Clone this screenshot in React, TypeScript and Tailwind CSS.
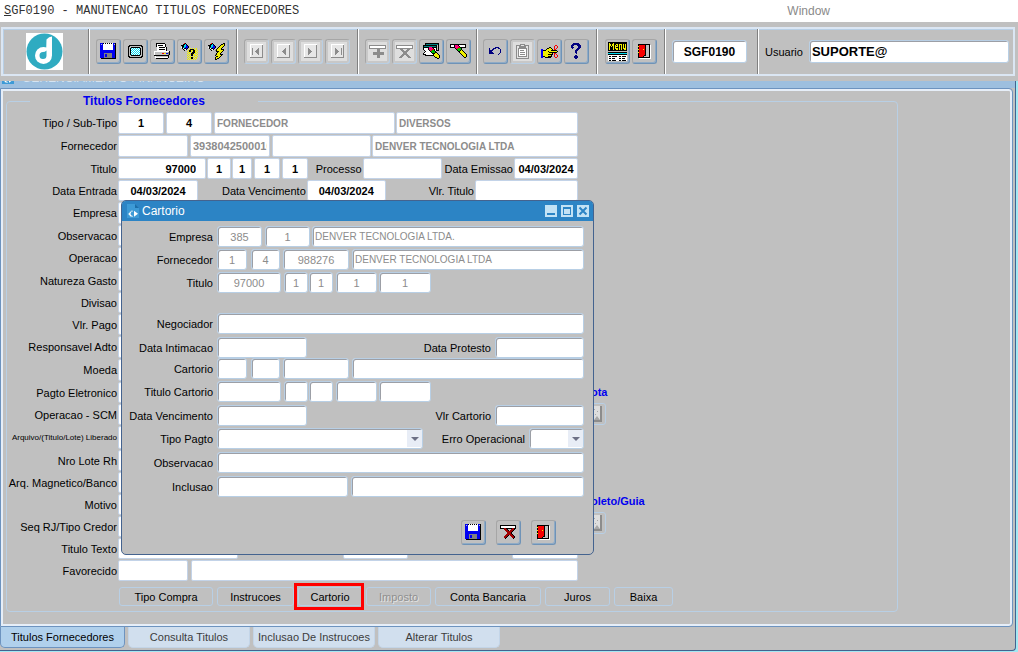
import { useState } from "react";
import type { ReactNode } from "react";
import clsx from "clsx";

// One character per pixel, "." is transparent.
const PALETTE: Record<string, string> = {
  K: "#000000",
  W: "#ffffff",
  B: "#0000f0",
  N: "#000080",
  G: "#808080",
  L: "#c0c0c0",
  S: "#8c8c8c",
  D: "#e6e6e6",
  R: "#f80000",
  M: "#a00000",
  Y: "#f0f000",
  C: "#00d8f0",
  T: "#008080",
  E: "#00c000",
  P: "#ff0080",
};

const FLOPPY = [
  "BBBKWKWKWKWKWBBK",
  "BLBWWWWWWWWWWBLK",
  "BBBWWWWWWWWWWBBK",
  "BBBWWWWWWWWWWBBK",
  "BBBWWWWWWWWWWBBK",
  "BBBWWWWWWWWWWBBK",
  "BBBWWWWWWWWWWBBK",
  "BBBBBBBBBBBBBBBK",
  "BBBBBBBBBBBBBBBK",
  "BBBBBBBBBBBBBBBK",
  "BBBBGGGGGGGGBBBK",
  "BBBBGBBGGGGGBBBK",
  "BBBBGBBGGGGGBBBK",
  "BBBBGBBGGGGGBBBK",
  "BBBBGGGGGGGGBBBK",
  ".KKKKKKKKKKKKKKK",
];

const SCREEN = [
  ".KKKKKKKKKKKKK.",
  "KKLLLLLLLLLLLKK",
  "KLLKKKKKKKKKLLK",
  "KLKCWCWCWCWCKLK",
  "KLKWCWCWCWCWKLK",
  "KLKCWCWCWCWCKLK",
  "KLKWCWCWCWCWKLK",
  "KLKCWCWCWCWCKLK",
  "KLKWCWCWCWCWKLK",
  "KLKCWCWCWCWCKLK",
  "KLLKKKKKKKKKLLK",
  "KKLLLLLLLLLLLKK",
  ".KKKKKKKKKKKKK.",
];

const PRINTER = [
  "..KKKKKKKKK.....",
  "..KWWWWWWWWK....",
  "..KWKKKKKWWK....",
  "..KWWWWWWWWK....",
  "...WWKKKKKKWK...",
  "...WWWWWWWWWK...",
  "...WWKKKKKKWK...",
  "...WWWWWWWWWK...",
  "WWWWWWWWWWWWWWWK",
  "WLLLLLLLLLLLLLGK",
  "WLLLLLLLRRYYBBGK",
  "WLLLLLLLLLLLLLGK",
  "KKKKKKKKKKKKKKK.",
  ".WLLLLLLLLLLLLK.",
  ".WWWWWWWWWWWWWK.",
  "..KKKKKKKKKKKK..",
];

const TORCH_HELP = [
  "...RK............",
  "..KKCK...........",
  "KKKCCBK..........",
  ".KKCCBBK.........",
  "WKTCBBBK.........",
  ".KWKKBK..Y.Y.Y.Y.",
  "..K.WK..YKKKKY.Y.",
  "...K...YKKYYKKY.Y",
  "......Y.KKY.KKYY.",
  ".......YY.YKKKY.Y",
  "......Y.Y.KKK.YY.",
  ".......Y.YKKYY..Y",
  "......Y.Y.KK.YYY.",
  ".......Y.Y.Y.Y..Y",
  "......Y.YYKKY.YY.",
  ".......Y.YKK.Y.Y.",
  "......Y.Y.Y.Y.Y..",
];

const TORCH_BOLT = [
  "...RK..........KK",
  "..KKCK.......KKYK",
  "KKKCCBK.....KYYYK",
  ".KKCCBBK...KYYYK.",
  "WKTCBBBK..KYYYK..",
  ".KWKKBK..KYYYK...",
  "..K.WK..KYYYYKKK.",
  "...K...GKYYYYYYK.",
  "........KKKYYYK..",
  ".........KYYYK...",
  "........KYYYK....",
  ".......GKYYYKKK..",
  ".......KYYYYYK...",
  "........KKYYK....",
  ".......KYYYK.....",
  ".......KYKK......",
  ".......KK........",
];

const ADD_RECORD = [
  "SSSSSSSSSSSSSSSSS",
  "SWWWWWWWWWWWWWWWS",
  "SWWWWWWWWWWWWWWWS",
  "SSSSSSSSSSSSSSSSS",
  "........SSS......",
  "........SSS......",
  "........SSS......",
  "....SSSSSSSSSSS..",
  "....SSSSSSSSSSS..",
  "....SSSSSSSSSSS..",
  "........SSS......",
  "........SSS......",
  "........SSS......",
];

const DROP_RECORD = [
  "SSSSSSSSSSSSSSSSS",
  "SWWWWWWWWWWWWWWWS",
  "SWWWWWWWWWWWWWWWS",
  "SSSSSSSSSSSSSSSSS",
  "....SSS....SSS...",
  ".....SSS..SSS....",
  "......SSSSSS.....",
  ".......SSSS......",
  ".......SSSS......",
  "......SSSSSS.....",
  ".....SSS..SSS....",
  "....SSS....SSS...",
  "...SSS......SSS..",
];

const CANCEL_RECORD = [
  "KKKKKKKKKKKKKKKK",
  "KWWWWWWWWWWWWWWK",
  "KWWWWWWWWWWWWWWK",
  "KKKKMMKKKKKKMMKK",
  "....MMMK...MMMK.",
  ".....MMMK.MMMK..",
  "......MMMMMMK...",
  ".......MMMMK....",
  ".......MMMMK....",
  "......MMMMMMK...",
  ".....MMMK.MMMK..",
  "....MMMK...MMMK.",
  "....MMK.....MMK.",
  ".....K.......K..",
];

const CLEAR_FORM = [
  "..KKKKKKKKKKKKKK.",
  "..KTTTTTTTTTTTTK.",
  "KKKKKKKKKKKKKKLK.",
  "KTTTTTTTTTTTTKLK.",
  "KKKKKKPPPKKKKKLK.",
  "KWWWWKPPPPKWWKLK.",
  "KWWWWKPPPRRKWKLK.",
  ".KWWWWKPREEKWKKK.",
  "..KWWWWKEEEEK....",
  ".KWWWWWWKEEEKK...",
  "KWWWWWWWWKKKYYK..",
  "KKKWWWWWWWKYYYYK.",
  "..KKKKKKKKKYYYYYK",
  "...........KYYYYK",
  "............KKYYK",
  "..............KK.",
];

const CLEAR_RECORD = [
  "KKKKKKKKKKKKKKKK.",
  "KWWWKPPPKWWWWWWK.",
  "KWWWKPPPPKWWWWWK.",
  "KKKKKPPPRRKKKKKK.",
  ".....KPREEEK.....",
  "......KEEEEK.....",
  ".......KEEKYK....",
  "........KKYYYK...",
  ".........KYYYYK..",
  "..........KYYYYK.",
  "...........KYYYYK",
  "............KYYYK",
  ".............KYYK",
  "..............KK.",
];

const UNDO = [
  "......NNNN...",
  "N...NNN..NN..",
  "N..NN......N.",
  "NNNN.......N.",
  "NNN........N.",
  "NNNN.......N.",
  "NNNNN.....N..",
  ".........N...",
];

const HAND = [
  "..............RR.",
  ".............R..R",
  "........KK...R..R",
  "......KKYYK..R.R.",
  "BB...KYYYYYK.RR..",
  "BBKKKYYYYYKKKKKK.",
  "BBYYYYYKYYYYYYYYK",
  "BBYYYYYYKKKKKKKK.",
  "BBYYYYYYYYYK.RR..",
  "BBYYYYYKKKKK.R.R.",
  "BBYYYYYYYYK..R..R",
  "BBKKYYYKKKK..R..R",
  "BB..KKKKKK....RR.",
];

const HELP = [
  "..NNNNNN..",
  ".NNNNNNNN.",
  "NNN...NNNN",
  "NN.....NNN",
  "NNN....NNN",
  ".N....NNN.",
  ".....NNN..",
  "....NNN...",
  "....NN....",
  "....NN....",
  ".....N....",
  "..........",
  "....NN....",
  "...NNNN...",
  "...NNNN...",
  "....NN....",
];

const MENU = [
  "KKKKKKKKKKKKKKKKKKK",
  "KYKKKYKKKKKKKKKKKKK",
  "KYYKYYKKYYKYYYKYKYK",
  "KYYKYYKYKYKYKYKYKYK",
  "KYKYKYKYYYKYKYKYKYK",
  "KYKKKYKYKKKYKYKYKYK",
  "KYKKKYKYYYKYKYKYYYK",
  "KYKKKYKKYYKYKYKKYYK",
  "KKKKKKKKKKKKKKKKKKK",
  "...................",
  "KKKKKKKKKKKKKKKKKKK",
  "CCCCCCCCCCCCCCCCCCC",
  "KKKKKKKKKKKKKKKKKKK",
  "WWWWWWWWWWWWWWWWWWW",
  "WKKWKKKKKWWKKWKKKKW",
  "WWWWWWWWWWWWWWWWWWW",
  "WKKWKKKWWWWKKWKKKWW",
  "WWWWWWWWWWWWWWWWWWW",
  "WKKWKKKKWWWKKWKKKKW",
];

const DOOR = [
  "KKKKKKKKKKKK.",
  "KRRRRRRKLLLKW",
  "YRRRRRRKLLLKW",
  "KRRRRRRKLLLKW",
  "KRRRRRRKLLLKW",
  "YRRRRYRKLLLKW",
  "KRRRRRRKLLLKW",
  "KRRRRRRKLLLKW",
  "YRRRRRRKLLLKW",
  "KRRRRRRKLLLKW",
  "KRRRRRRKLLLKW",
  "KRRRRRKKLLLKW",
  "KRRRRKLLLLLKW",
  "KKKKKKKKKKKKW",
  ".WWWWWWWWWWWW",
];

const CLIPBOARD = [
  "....SSSSS....",
  "SSSSSDDDSSSSS",
  "SDDSSSSSSSDDS",
  "SDDSSSSSSSDDS",
  "SDSSSSSSSSSDS",
  "SDSWWWWWWWSDS",
  "SDSWSSSSWWSDS",
  "SDSWWWWWWWSDS",
  "SDSWSSSSSWSDS",
  "SDSWWWWWWWSDS",
  "SDSWSSSSSWSDS",
  "SDSWWWWWWWSDS",
  "SDSSSSSSSSSDS",
  "SDDDDDDDDDDDS",
  "SSSSSSSSSSSSS",
];

const NAV_TOP = [
  "WWWWWWWWWWWWW",
  "WDDDDDDDDDDDS",
  "WDDDDDDDDDDDS",
  "WDDDDDDDDDDDS",
];
const NAV_BOTTOM = [
  "WDDDDDDDDDDDS",
  "WDDDDDDDDDDDS",
  "SSSSSSSSSSSSS",
];
const FIRST = [
  ...NAV_TOP,
  "WDSDDDDDSDDDS",
  "WDSDDDDSSDDDS",
  "WDSDDDSSSDDDS",
  "WDSDDSSSSDDDS",
  "WDSDDDSSSDDDS",
  "WDSDDDDSSDDDS",
  "WDSDDDDDSDDDS",
  ...NAV_BOTTOM,
];
const PREV = FIRST.map((row) => (row.startsWith("WDS") ? "WDD" + row.slice(3) : row));
const LAST = [
  ...NAV_TOP,
  "WDDDSDDDDDSDS",
  "WDDDSSDDDDSDS",
  "WDDDSSSDDDSDS",
  "WDDDSSSSDDSDS",
  "WDDDSSSDDDSDS",
  "WDDDSSDDDDSDS",
  "WDDDSDDDDDSDS",
  ...NAV_BOTTOM,
];
const NEXT = LAST.map((row) => (row.endsWith("SDS") ? row.slice(0, 10) + "DDS" : row));

function PixelIcon({ map }: { map: string[] }) {
  // Odd sizes keep the grid on whole pixels when centered in a 23px button
  const width = Math.max(...map.map((row) => row.length)) | 1;
  const height = map.length | 1;
  return (
    <svg
      width={width}
      height={height}
      viewBox={`0 0 ${width} ${height}`}
      shapeRendering="crispEdges"
      className="shrink-0"
      aria-hidden
    >
      {map.flatMap((row, y) =>
        [...row].map((c, x) =>
          PALETTE[c] ? <rect key={`${x}-${y}`} x={x} y={y} width={1} height={1} fill={PALETTE[c]} /> : null,
        ),
      )}
    </svg>
  );
}

function IconButton({ label, map, disabled }: { label: string; map: string[]; disabled?: boolean }) {
  return (
    <button
      type="button"
      aria-label={label}
      disabled={disabled}
      className={clsx(
        "flex h-[25px] w-[25px] shrink-0 items-center justify-center rounded-[3px] border border-t-[#a6a6a6] border-l-[#a6a6a6]",
        disabled
          ? "border-r-[#b8cfe5] border-b-[#b8cfe5] bg-[#dedede] shadow-[inset_0_0_0_2px_#c8c8c8]"
          : "border-r-[#6f93b7] border-b-[#6f93b7] shadow-[inset_-1px_-1px_0_#8fabc6]",
      )}
    >
      <PixelIcon map={map} />
    </button>
  );
}

function ToolGroup({ className, children }: { className?: string; children: ReactNode }) {
  return (
    <div
      className={clsx(
        "flex items-center gap-[2px] border-r border-[#808080] shadow-[1px_0_0_#ffffff]",
        className,
      )}
    >
      {children}
    </div>
  );
}

type InputProps = {
  id?: string;
  label?: string;
  value?: string;
  className?: string;
};

// Flat field of the main form
function Field({ id, label, value = "", className }: InputProps) {
  return (
    <input
      id={id}
      aria-label={label}
      defaultValue={value}
      className={clsx(
        "h-full min-w-0 rounded-[2px] border border-[#c3d3e8] bg-white px-[2px] font-bold outline-none",
        className,
      )}
    />
  );
}

// Sunken field of the dialog
function SunkenField({ id, label, value = "", className }: InputProps) {
  return (
    <input
      id={id}
      aria-label={label}
      defaultValue={value}
      className={clsx(
        "h-[21px] min-w-0 rounded-[3px] border border-[#b8cfe5] bg-white px-[2px] text-[#8c8c8c] shadow-[inset_1px_1px_0_#9c9fa6] outline-none",
        className,
      )}
    />
  );
}

function SunkenSelect({ id, className }: { id: string; className: string }) {
  return (
    <div className={clsx("relative h-[21px]", className)}>
      <select
        id={id}
        className="h-full w-full appearance-none rounded-[3px] border border-[#b8cfe5] bg-white shadow-[inset_1px_1px_0_#9c9fa6] outline-none"
      >
        <option></option>
      </select>
      <span className="pointer-events-none absolute inset-y-[2px] right-[1px] flex w-[15px] items-center justify-center bg-[#e8edf6]">
        <svg width="8" height="4" viewBox="0 0 8 4" aria-hidden>
          <path d="M0 0h8L4 4z" fill="#6c7086" />
        </svg>
      </span>
    </div>
  );
}

function FormRow({ label, id, height = "h-[22px]", small, children }: {
  label: string;
  id: string;
  height?: string;
  small?: boolean;
  children?: ReactNode;
}) {
  return (
    <div className={clsx("flex pb-px", height)}>
      <label
        htmlFor={id}
        className={clsx(
          "flex w-[111px] shrink-0 items-center justify-end pr-px whitespace-nowrap",
          small && "text-[8px]",
        )}
      >
        {label}
      </label>
      {children ?? <Field id={id} className="flex-1" />}
    </div>
  );
}

function DialogRow({ label, id, className = "mt-[3px]", children }: {
  label: string;
  id: string;
  className?: string;
  children: ReactNode;
}) {
  return (
    <div className={clsx("flex h-5", className)}>
      <label htmlFor={id} className="flex h-[21px] w-[95px] shrink-0 items-center justify-end pr-1 whitespace-nowrap">
        {label}
      </label>
      {children}
    </div>
  );
}

const HIDDEN_ROWS = [
  { label: "Empresa", height: "h-[23px]" },
  { label: "Observacao" },
  { label: "Operacao", height: "h-[23px]" },
  { label: "Natureza Gasto" },
  { label: "Divisao" },
  { label: "Vlr. Pago" },
  { label: "Responsavel Adto", height: "h-[23px]" },
  { label: "Moeda", height: "h-[23px]" },
  { label: "Pagto Eletronico" },
  { label: "Operacao - SCM" },
  { label: "Arquivo/(Titulo/Lote) Liberado", height: "h-6", small: true },
  { label: "Nro Lote Rh" },
  { label: "Arq. Magnetico/Banco" },
  { label: "Motivo" },
  { label: "Seq RJ/Tipo Credor" },
];

const ACTIONS = [
  { label: "Tipo Compra", width: "w-[94px]" },
  { label: "Instrucoes", width: "w-[77px]" },
  { label: "Cartorio", width: "w-[64px]", marked: true },
  { label: "Imposto", width: "w-[65px]", disabled: true },
  { label: "Conta Bancaria", width: "w-[106px]" },
  { label: "Juros", width: "w-[65px]" },
  { label: "Baixa", width: "w-[59px]" },
];

const TABS = ["Titulos Fornecedores", "Consulta Titulos", "Inclusao De Instrucoes", "Alterar Titulos"];

function Toolbar() {
  return (
    <div className="mt-[5px] mr-[3px] ml-px flex h-[49px] border-2 border-[#dbe6f3] shadow-[inset_1px_1px_0_#b8cfe5]">
      <ToolGroup className="w-[86px] pl-[23px]">
        <svg width="37" height="37" viewBox="0 0 37 37" aria-label="Logo">
          <rect width="37" height="37" fill="#fff" />
          <circle cx="18.5" cy="18.5" r="18" fill="#2fabc1" />
          <circle cx="17.500" cy="22.500" r="8.500" fill="#fff" />
          <path d="M20.500 6.500q2.500-3 5.500-3v19h-6z" fill="#fff" />
          <path d="M20.500 17.500v5a3.500 3.500 0 1 1-3.500-3.500q2 0 3.500-1.500z" fill="#2fabc1" />
        </svg>
      </ToolGroup>
      <ToolGroup className="w-[148px] pl-[7px]">
        <IconButton label="Salvar" map={FLOPPY} />
        <IconButton label="Tela" map={SCREEN} />
        <IconButton label="Imprimir" map={PRINTER} />
        <IconButton label="Entrar consulta" map={TORCH_HELP} />
        <IconButton label="Executar consulta" map={TORCH_BOLT} />
      </ToolGroup>
      <ToolGroup className="w-[121px] pl-[7px]">
        <IconButton label="Primeiro" map={FIRST} disabled />
        <IconButton label="Anterior" map={PREV} disabled />
        <IconButton label="Proximo" map={NEXT} disabled />
        <IconButton label="Ultimo" map={LAST} disabled />
      </ToolGroup>
      <ToolGroup className="w-[119px] pl-[7px]">
        <IconButton label="Inserir registro" map={ADD_RECORD} disabled />
        <IconButton label="Remover registro" map={DROP_RECORD} disabled />
        <IconButton label="Limpar tela" map={CLEAR_FORM} />
        <IconButton label="Limpar registro" map={CLEAR_RECORD} />
      </ToolGroup>
      <ToolGroup className="w-[120px] pl-[6px]">
        <IconButton label="Desfazer" map={UNDO} />
        <IconButton label="Colar" map={CLIPBOARD} disabled />
        <IconButton label="Recortar" map={HAND} />
        <IconButton label="Ajuda" map={HELP} />
      </ToolGroup>
      <ToolGroup className="w-[68px] pl-[8px]">
        <IconButton label="Menu" map={MENU} />
        <IconButton label="Sair" map={DOOR} />
      </ToolGroup>
      <ToolGroup className="w-[93px] pl-[7px]">
        <input
          aria-label="Programa"
          defaultValue="SGF0190"
          className="h-[23px] w-[75px] rounded-[3px] border border-[#b8cfe5] bg-white text-center text-[12px] font-bold shadow-[inset_1px_1px_0_#9c9fa6] outline-none"
        />
      </ToolGroup>
      <div className="flex flex-1 items-center gap-[6px] pr-1 pl-[7px]">
        <label htmlFor="usuario">Usuario</label>
        <input
          id="usuario"
          defaultValue="SUPORTE@"
          className="h-[23px] min-w-0 flex-1 rounded-[3px] border border-[#b8cfe5] bg-white px-[2px] text-[13px] font-bold shadow-[inset_1px_1px_0_#9c9fa6] outline-none"
        />
      </div>
    </div>
  );
}

function AttachButton({ label }: { label: string }) {
  return (
    <button
      type="button"
      aria-label={label}
      className="flex h-[22px] w-[25px] items-center justify-end rounded-[3px] border border-[#b8cfe5] pr-[3px]"
    >
      <svg width="17" height="16" viewBox="0 0 17 16" aria-hidden>
        <path d="M0 0h17v16H0z" fill="#8c8c8c" />
        <path d="M0 0h15v14H0z" fill="#dedede" />
        <path d="M9 14l3-4 3 4z" fill="#a8a8a8" />
        <path d="M9 3h1v1H9zM12 5h1v1h-1zM10 8h1v1h-1z" fill="#a8a8a8" />
      </svg>
    </button>
  );
}

function WindowIcon({ size }: { size: number }) {
  return (
    <svg width={size} height={size + 2} viewBox="0 0 12 14" className="shrink-0" aria-hidden>
      <path d="M0 0h8l4 4v10H0z" fill="#3d9ad6" />
      <path d="M8 0v4h4z" fill="#1c6da8" />
      <path
        d="M5.500 6.500v1.200a2 2 0 0 0 0 4v1.300h-1v-1L3 12.500 2.500 11 1.500 10.500v-1L2.500 9 3 7.500l1.500.500v-1.500zM7 6.800l4 3-4 3z"
        fill="#fff"
      />
    </svg>
  );
}

function CartorioDialog() {
  return (
    <section
      role="dialog"
      aria-label="Cartorio"
      className="absolute top-[119px] left-[121px] w-[473px] overflow-hidden rounded-[5px] border border-[#44638f] bg-[#c0c0c0]"
    >
      <header className="flex h-5 items-center bg-[#2c84c5] pr-1 pl-[5px]">
        <WindowIcon size={12} />
        <h2 className="ml-[3px] text-[12px] text-white">Cartorio</h2>
        <div className="ml-auto flex gap-1">
          <button type="button" aria-label="Minimizar" className="h-3 w-3 bg-[#c3e2f5]">
            <svg width="12" height="12" viewBox="0 0 12 12"><path d="M2 8h8v2H2z" fill="#2c84c5" /></svg>
          </button>
          <button type="button" aria-label="Maximizar" className="h-3 w-3 bg-[#c3e2f5]">
            <svg width="12" height="12" viewBox="0 0 12 12">
              <path d="M2 2h8v8H2zM3 4v5h6V4z" fill="#2c84c5" fillRule="evenodd" />
            </svg>
          </button>
          <button type="button" aria-label="Fechar" className="h-3 w-3 bg-[#c3e2f5]">
            <svg width="12" height="12" viewBox="0 0 12 12">
              <path d="M2.500 2.500l7 7M9.500 2.500l-7 7" stroke="#2c84c5" strokeWidth="2" />
            </svg>
          </button>
        </div>
      </header>

      <form className="pt-[5px] pr-[9px] pb-[9px]">
        <DialogRow label="Empresa" id="d-empresa" className="mt-0">
          <SunkenField id="d-empresa" value="385" className="w-[45px] text-center" />
          <SunkenField label="Filial" value="1" className="ml-[3px] w-[45px] text-center" />
          <SunkenField label="Nome empresa" value="DENVER TECNOLOGIA LTDA." className="ml-[2px] flex-1 text-[10px]" />
        </DialogRow>
        <DialogRow label="Fornecedor" id="d-fornecedor">
          <SunkenField id="d-fornecedor" value="1" className="w-[30px] text-center" />
          <SunkenField label="Sub-tipo" value="4" className="ml-1 w-[29px] text-center" />
          <SunkenField label="Codigo" value="988276" className="ml-[3px] w-[66px] text-center" />
          <SunkenField label="Nome fornecedor" value="DENVER TECNOLOGIA LTDA" className="ml-[3px] flex-1 text-[10px]" />
        </DialogRow>
        <DialogRow label="Titulo" id="d-titulo">
          <SunkenField id="d-titulo" value="97000" className="w-[64px] text-center" />
          <SunkenField label="Parcela" value="1" className="ml-[3px] w-6 text-center" />
          <SunkenField label="Sequencia" value="1" className="ml-px w-6 text-center" />
          <SunkenField label="Serie" value="1" className="ml-[3px] w-[41px] text-center" />
          <SunkenField label="Complemento" value="1" className="ml-[2px] w-[52px] text-center" />
        </DialogRow>
        <DialogRow label="Negociador" id="d-negociador" className="mt-[21px]">
          <SunkenField id="d-negociador" className="flex-1" />
        </DialogRow>
        <DialogRow label="Data Intimacao" id="d-intimacao" className="mt-1">
          <SunkenField id="d-intimacao" className="w-[90px]" />
          <label htmlFor="d-protesto" className="ml-auto flex h-[21px] items-center pr-1">Data Protesto</label>
          <SunkenField id="d-protesto" className="w-[89px]" />
        </DialogRow>
        <DialogRow label="Cartorio" id="d-cartorio" className="mt-px">
          <SunkenField id="d-cartorio" className="w-[30px]" />
          <SunkenField label="Cartorio tipo" className="ml-1 w-[29px]" />
          <SunkenField label="Cartorio codigo" className="ml-[3px] w-[66px]" />
          <SunkenField label="Cartorio nome" className="ml-[3px] flex-1" />
        </DialogRow>
        <DialogRow label="Titulo Cartorio" id="d-titcart">
          <SunkenField id="d-titcart" className="w-[64px]" />
          <SunkenField label="Titulo cartorio parcela" className="ml-[3px] w-6" />
          <SunkenField label="Titulo cartorio sequencia" className="ml-px w-6" />
          <SunkenField label="Titulo cartorio serie" className="ml-[3px] w-[41px]" />
          <SunkenField label="Titulo cartorio complemento" className="ml-[2px] w-[52px]" />
        </DialogRow>
        <DialogRow label="Data Vencimento" id="d-venc" className="mt-1">
          <SunkenField id="d-venc" className="w-[90px]" />
          <label htmlFor="d-valor" className="ml-auto flex h-[21px] items-center pr-1">Vlr Cartorio</label>
          <SunkenField id="d-valor" className="w-[89px]" />
        </DialogRow>
        <DialogRow label="Tipo Pagto" id="d-tipo">
          <SunkenSelect id="d-tipo" className="w-[206px]" />
          <label htmlFor="d-erro" className="ml-auto flex h-[21px] items-center pr-1">Erro Operacional</label>
          <SunkenSelect id="d-erro" className="w-[55px]" />
        </DialogRow>
        <DialogRow label="Observacao" id="d-obs" className="mt-1">
          <SunkenField id="d-obs" className="flex-1" />
        </DialogRow>
        <DialogRow label="Inclusao" id="d-inclusao" className="mt-1">
          <SunkenField id="d-inclusao" className="w-[131px]" />
          <SunkenField label="Usuario inclusao" className="ml-[3px] flex-1" />
        </DialogRow>

        <div className="mt-6 flex justify-end gap-[10px] pr-7">
          <IconButton label="Salvar cartorio" map={FLOPPY} />
          <IconButton label="Cancelar" map={CANCEL_RECORD} />
          <IconButton label="Fechar cartorio" map={DOOR} />
        </div>
      </form>
    </section>
  );
}

export default function App() {
  const [tab, setTab] = useState(TABS[0]);

  return (
    <main className="flex min-h-screen flex-col bg-[#c0c0c0] font-['Liberation_Sans',Arial,sans-serif] text-[11px] leading-3 text-black">
      <header className="flex h-[22px] items-center bg-white pl-1">
        <h1 className="font-['Liberation_Mono','Courier_New',monospace] text-[12px] text-[#333333]">
          <span className="underline">S</span>GF0190 - MANUTENCAO TITULOS FORNECEDORES
        </h1>
        <button type="button" className="mr-[188px] ml-auto text-[12px] text-[#8a8a8a]">Window</button>
      </header>

      <Toolbar />

      <div className="mt-[5px] flex-1 bg-[#a3e8f3] pr-[2px]">
        <div className="relative rounded-br-[4px] border-r border-b border-[#44638f] bg-[#c0c0c0] pr-[2px] pb-[2px]">
          <div className="-mr-[2px] flex h-[7px] items-end gap-2 overflow-hidden bg-[#9dbfdf] pb-1 pl-[2px] text-[12px] text-[#d5e4f2]">
            <WindowIcon size={12} />
            <span>GERENCIAMENTO FINANCEIRO</span>
          </div>

          <div className="rounded-[4px] rounded-l-none border border-[#6d93bf] p-[2px] pt-[6px] pb-[14px] shadow-[inset_0_0_0_2px_#e6eef8]">
            <fieldset className="mr-28 ml-[3px] flex rounded-[4px] border border-[#b8cfe5] pt-[5px] pb-[5px]">
              <legend className="ml-[23px] px-[53px] text-[12px] font-bold text-[#0000f0]">Titulos Fornecedores</legend>

              <div className="w-[571px]">
                <FormRow label="Tipo / Sub-Tipo" id="tipo" height="h-[23px]">
                  <Field id="tipo" value="1" className="w-[46px] text-center" />
                  <Field label="Sub-Tipo" value="4" className="ml-[2px] w-[46px] text-center" />
                  <Field label="Descricao tipo" value="FORNECEDOR" className="ml-[2px] w-[181px] text-[10px] text-[#8c8c8c]" />
                  <Field label="Descricao sub-tipo" value="DIVERSOS" className="ml-px flex-1 text-[10px] text-[#8c8c8c]" />
                </FormRow>
                <FormRow label="Fornecedor" id="fornecedor" height="h-[23px]">
                  <Field id="fornecedor" className="w-[70px]" />
                  <Field label="CNPJ" value="39380425000100" className="ml-[2px] w-20 text-[#8c8c8c]" />
                  <Field label="Inscricao" className="ml-[2px] w-[99px]" />
                  <Field label="Razao social" value="DENVER TECNOLOGIA LTDA" className="ml-px flex-1 text-[10px] text-[#8c8c8c]" />
                </FormRow>
                <FormRow label="Titulo" id="titulo">
                  <Field id="titulo" value="97000" className="w-[88px] pr-[9px] text-right" />
                  <Field label="Parcela" value="1" className="ml-px w-6 text-center" />
                  <Field label="Sequencia" value="1" className="ml-px w-5 text-center" />
                  <Field label="Serie" value="1" className="ml-[2px] w-[26px] text-center" />
                  <Field label="Complemento" value="1" className="ml-[2px] w-[26px] text-center" />
                  <label htmlFor="processo" className="ml-auto flex items-center pr-px">Processo</label>
                  <Field id="processo" className="w-[79px]" />
                  <label htmlFor="emissao" className="ml-[3px] flex items-center pr-px">Data Emissao</label>
                  <Field id="emissao" value="04/03/2024" className="w-[64px] text-center" />
                </FormRow>
                <FormRow label="Data Entrada" id="entrada">
                  <Field id="entrada" value="04/03/2024" className="w-[80px] text-center" />
                  <label htmlFor="vencimento" className="ml-6 flex items-center pr-px">Data Vencimento</label>
                  <Field id="vencimento" value="04/03/2024" className="w-[79px] text-center" />
                  <label htmlFor="valor" className="ml-auto flex items-center pr-px">Vlr. Titulo</label>
                  <Field id="valor" className="w-[103px]" />
                </FormRow>

                {HIDDEN_ROWS.map((row, i) => (
                  <FormRow key={row.label} id={`campo-${i}`} label={row.label} height={row.height} small={row.small} />
                ))}

                <FormRow label="Titulo Texto" id="texto">
                  <Field id="texto" className="w-[120px]" />
                  <Field label="Valor texto" className="ml-[105px] w-[65px]" />
                  <Field label="Saldo" className="ml-auto w-[66px]" />
                </FormRow>
                <FormRow label="Favorecido" id="favorecido">
                  <Field id="favorecido" className="w-[70px]" />
                  <Field label="Nome favorecido" className="ml-[3px] flex-1" />
                </FormRow>

                <div className="mt-[5px] ml-28 flex w-max gap-1">
                  {ACTIONS.map((a) => (
                    <button
                      key={a.label}
                      type="button"
                      disabled={a.disabled}
                      className={clsx(
                        "relative h-[19px] rounded-[3px] border border-[#b8cfe5] disabled:text-[#8f8f8f] disabled:[text-shadow:1px_1px_0_#e4e4e4]",
                        a.width,
                      )}
                    >
                      {a.label}
                      {a.marked && (
                        <span className="absolute -inset-y-[5px] -right-[3px] -left-[5px] border-3 border-[#ff0000]" />
                      )}
                    </button>
                  ))}
                </div>
              </div>

              <aside className="ml-[5px] pt-[274px] font-bold text-[#0000f0]">
                <p>Nota</p>
                <div className="mt-[5px] -ml-[2px]"><AttachButton label="Anexar nota" /></div>
                <p className="mt-[70px]">Boleto/Guia</p>
                <div className="mt-[5px] -ml-[2px]"><AttachButton label="Anexar boleto" /></div>
              </aside>
            </fieldset>
          </div>

          <div role="tablist" className="flex gap-[3px]">
            {TABS.map((t) => (
              <button
                key={t}
                type="button"
                role="tab"
                aria-selected={t === tab}
                onClick={() => setTab(t)}
                className={clsx(
                  "h-[21px] rounded-b-[5px] border border-t-0",
                  t === TABS[0] ? "w-[125px]" : "w-[122px]",
                  t === tab
                    ? "border-[#6d93bf] bg-[#b0d0ec] text-black"
                    : "border-[#c3d5e8] bg-[#d1dfee] text-[#3c3c3c]",
                )}
              >
                {t}
              </button>
            ))}
          </div>

          <CartorioDialog />
        </div>
      </div>
    </main>
  );
}
